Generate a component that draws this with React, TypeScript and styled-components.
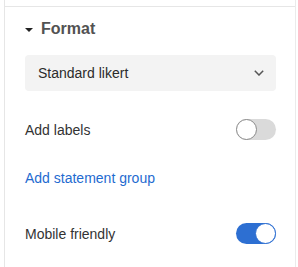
import styled, { createGlobalStyle } from 'styled-components'

const GlobalStyle = createGlobalStyle`
  html, body {
    margin: 0;
    padding: 0;
    background: #ffffff;
    font-family: "Liberation Sans", Arial, sans-serif;
  }
`

const Panel = styled.div`
  box-sizing: border-box;
  margin-left: 4px;
  width: 292px;
  height: 267px;
  padding-top: 6px;
  border-left: 1px solid #e6e6e6;
  border-right: 1px solid #ebebeb;
  overflow: hidden;
`

const Section = styled.section`
  border-top: 1px solid #e6e6e6;
  padding: 12px 19px 0 20px;
  display: flex;
  flex-direction: column;
`

const Header = styled.div`
  display: flex;
  align-items: center;
  gap: 8px;
  height: 20px;
  font-size: 16px;
  font-weight: 700;
  color: #525252;
`

const Caret = styled.span`
  width: 0;
  height: 0;
  border-left: 4px solid transparent;
  border-right: 4px solid transparent;
  border-top: 4px solid #222;
  margin-top: 1px;
`

const Select = styled.div`
  margin-top: 16px;
  height: 36px;
  border-radius: 4px;
  background: #f3f3f3;
  display: flex;
  align-items: center;
  justify-content: space-between;
  padding: 0 12px 0 13px;
  font-size: 14px;
  color: #2b2b2b;
`

const Row = styled.div<{ $gap: number }>`
  margin-top: ${p => p.$gap}px;
  display: flex;
  align-items: center;
  justify-content: space-between;
  font-size: 14px;
  color: #333333;
`

const Link = styled.a`
  margin-top: 28px;
  line-height: 20px;
  font-size: 14px;
  color: #1f6bd0;
  text-decoration: none;
  cursor: pointer;
`

const Track = styled.div<{ $on: boolean }>`
  position: relative;
  box-sizing: border-box;
  width: 40px;
  height: 21px;
  border-radius: 11px;
  background: ${p => (p.$on ? '#2d6fd2' : '#dadada')};
`

const Knob = styled.span<{ $on: boolean }>`
  position: absolute;
  top: 0;
  left: ${p => (p.$on ? '19px' : '0')};
  box-sizing: border-box;
  width: 21px;
  height: 21px;
  border-radius: 50%;
  background: #ffffff;
  border: 1px solid ${p => (p.$on ? '#2d6fd2' : '#8a8a8a')};
`

const Toggle = ({ on }: { on: boolean }) => (
  <Track $on={on}>
    <Knob $on={on} />
  </Track>
)

export default function App() {
  return (
    <>
      <GlobalStyle />
      <Panel>
        <Section>
          <Header>
            <Caret />
            <span>Format</span>
          </Header>
          <Select>
            <span>Standard likert</span>
            <svg width="10" height="6" viewBox="0 0 10 6" fill="none">
              <path d="M0.8 0.8 L5 5 L9.2 0.8" stroke="#555" strokeWidth="1.5" />
            </svg>
          </Select>
          <Row $gap={28}>
            <span>Add labels</span>
            <Toggle on={false} />
          </Row>
          <Link>Add statement group</Link>
          <Row $gap={35}>
            <span>Mobile friendly</span>
            <Toggle on={true} />
          </Row>
        </Section>
      </Panel>
    </>
  )
}
